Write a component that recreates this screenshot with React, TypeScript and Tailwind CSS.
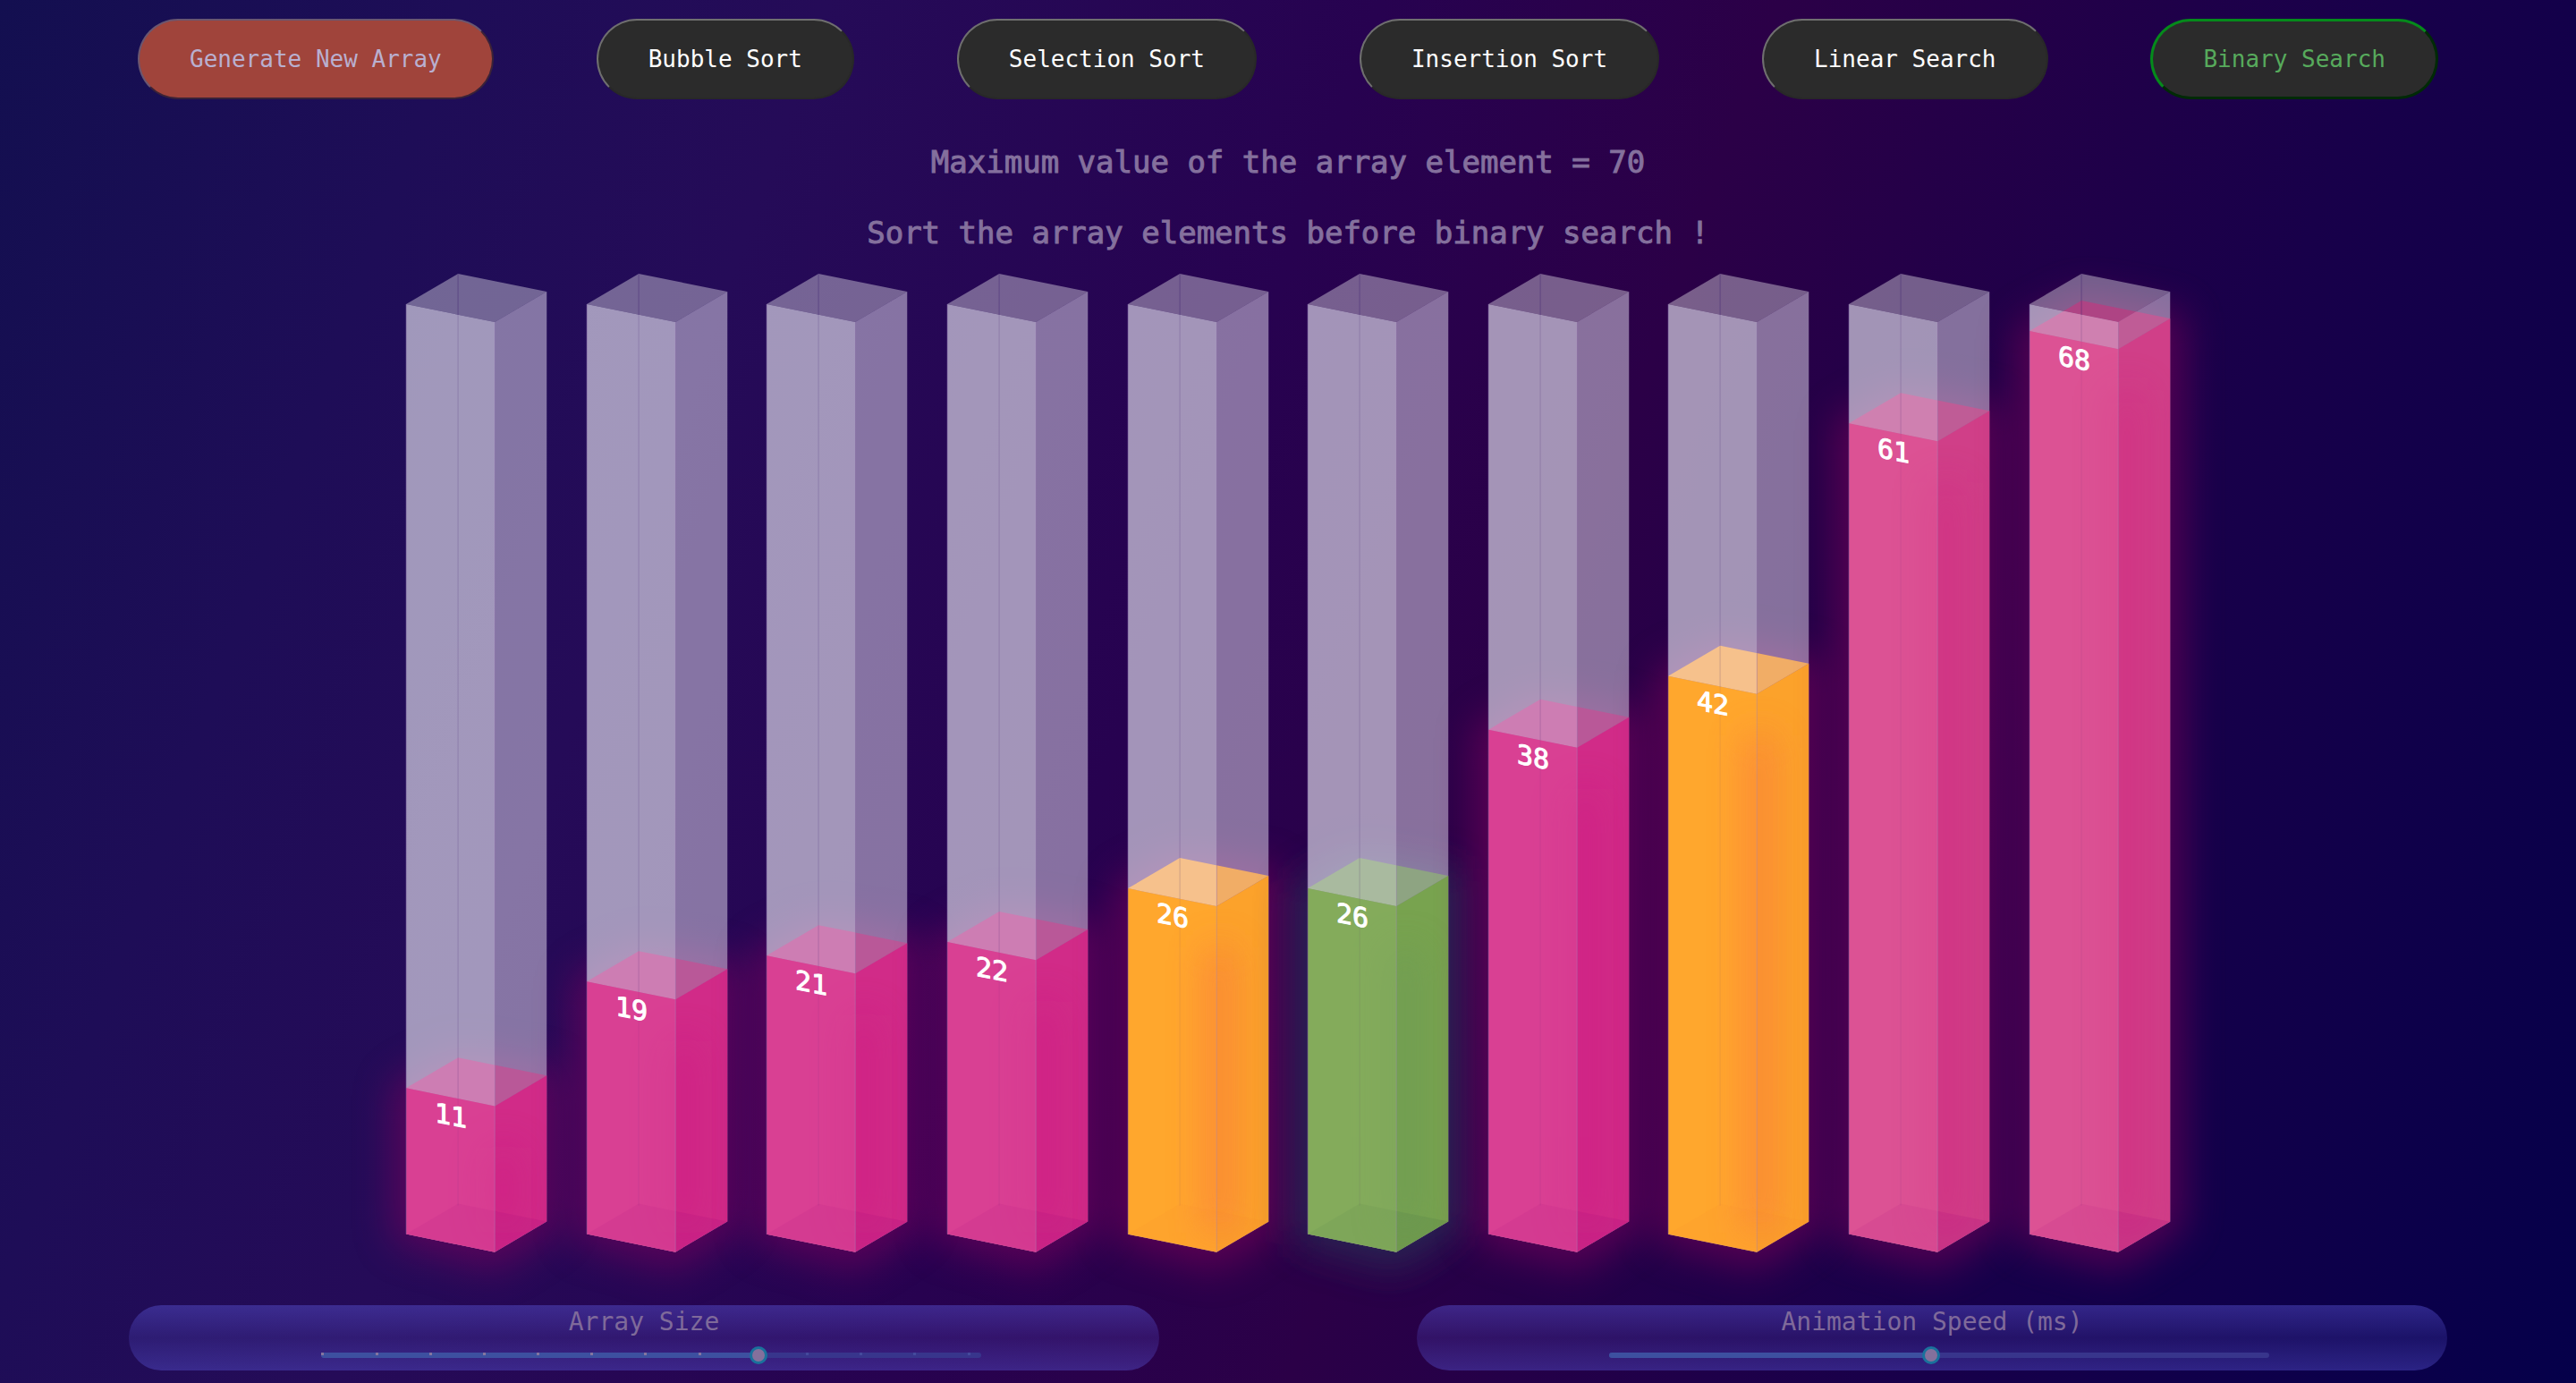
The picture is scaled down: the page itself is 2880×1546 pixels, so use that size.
import React, { useState } from "react";

type Tone = "pink" | "rose" | "amber" | "green";

const BARS: { value: number; tone: Tone }[] = [
  { value: 11, tone: "pink" },
  { value: 19, tone: "pink" },
  { value: 21, tone: "pink" },
  { value: 22, tone: "pink" },
  { value: 26, tone: "amber" },
  { value: 26, tone: "green" },
  { value: 38, tone: "pink" },
  { value: 42, tone: "amber" },
  { value: 61, tone: "rose" },
  { value: 68, tone: "rose" },
];

const MAX = 70;
const COLUMN = 1038;

interface Palette {
  front: string;
  right: string;
  core: string;
  glow: string;
  glowOpacity: number;
  lidLeft: string;
  lidRight: string;
  lidTop: string;
  floor: string;
}

const PALETTES: Record<Tone, Palette> = {
  pink: {
    front: "#d94093",
    right: "#d12b88",
    core: "#cf1480",
    glow: "#84045f",
    glowOpacity: 0.56,
    lidLeft: "#cd7db3",
    lidRight: "#b95898",
    lidTop: "#ae4482",
    floor: "#a81080",
  },
  rose: {
    front: "#dc5294",
    right: "#d03f88",
    core: "#d4207e",
    glow: "#84005a",
    glowOpacity: 0.56,
    lidLeft: "#cf80b0",
    lidRight: "#bf5c96",
    lidTop: "#ae4484",
    floor: "#a81080",
  },
  amber: {
    front: "#ffa72d",
    right: "#fca22b",
    core: "#f97440",
    glow: "#84005a",
    glowOpacity: 0.56,
    lidLeft: "#f6c18c",
    lidRight: "#f1ad66",
    lidTop: "#e8a060",
    floor: "#f07030",
  },
  green: {
    front: "#84ab5b",
    right: "#78a34f",
    core: "#66945a",
    glow: "#2c3458",
    glowOpacity: 0.7,
    lidLeft: "#a9ba9f",
    lidRight: "#8ea482",
    lidTop: "#88a070",
    floor: "#4c7848",
  },
};

function Bar({ value, tone, index }: { value: number; tone: Tone; index: number }) {
  const p = PALETTES[tone];
  const t = COLUMN - Math.round((value / MAX) * COLUMN);
  const lid = `0,${34 + t} 58,${t} 157,${20 + t} 99,${54 + t}`;
  const front = `0,${34 + t} 99,${54 + t} 99,1092 0,1072`;
  const right = `99,${54 + t} 157,${20 + t} 157,1058 99,1092`;
  const body = `0,${34 + t} 99,${54 + t} 157,${20 + t} 157,1058 99,1092 0,1072`;
  const id = `bar${index}`;
  return (
    <svg viewBox="0 0 157 1092" className="h-auto w-[78%] overflow-visible" role="img" aria-label={`Element ${value}`}>
      <defs>
        <filter id={`${id}-blur`} filterUnits="userSpaceOnUse" x="-150" y="-150" width="460" height="1400">
          <feGaussianBlur stdDeviation="22" />
        </filter>
        <clipPath id={`${id}-top`}>
          <polygon points="0,34 58,0 157,20 99,54" />
        </clipPath>
        <clipPath id={`${id}-front`}>
          <polygon points="0,34 99,54 99,1092 0,1072" />
        </clipPath>
        <clipPath id={`${id}-right`}>
          <polygon points="99,54 157,20 157,1058 99,1092" />
        </clipPath>
        <clipPath id={`${id}-body`}>
          <polygon points={body} />
        </clipPath>
      </defs>

      <polygon
        points={`-14,${30 + t} 58,${t - 6} 172,${14 + t} 172,1066 100,1112 -14,1080`}
        fill={p.glow}
        opacity={p.glowOpacity}
        filter={`url(#${id}-blur)`}
      />

      <polygon points="0,34 58,0 157,20 99,54" fill="#ffffff" fillOpacity="0.37" />
      <polygon points="0,34 99,54 99,1092 0,1072" fill="#e4e0f0" fillOpacity="0.66" />
      <polygon points="99,54 157,20 157,1058 99,1092" fill="#e4dcf0" fillOpacity="0.51" />

      <polygon points={lid} fill={p.lidTop} clipPath={`url(#${id}-top)`} />
      <polygon points={lid} fill={p.lidLeft} clipPath={`url(#${id}-front)`} />
      <polygon points={lid} fill={p.lidRight} clipPath={`url(#${id}-right)`} />
      <path d="M58 0V46" stroke="#3c2070" strokeOpacity="0.4" strokeWidth="1" />
      <path d={`M58 46V${t + 46}`} stroke="#3c2070" strokeOpacity="0.2" strokeWidth="1" />

      <polygon points={front} fill={p.front} />
      <polygon points={right} fill={p.right} />
      <g clipPath={`url(#${id}-body)`}>
        <polygon points="0,1072 58,1038 157,1058 99,1092" fill={p.floor} fillOpacity={tone === "amber" ? 0.06 : 0.2} />
        <rect
          x={tone === "amber" ? 90 : 92}
          y={t + 100}
          width={tone === "amber" ? 24 : 34}
          height={970 - t}
          fill={p.core}
          opacity={tone === "amber" ? 0.85 : 0.42}
          filter={`url(#${id}-blur)`}
        />
        {tone !== "amber" && (
          <rect x="0" y="0" width="99" height="1092" fill={p.front} fillOpacity="0.5" />
        )}
        <path d="M58 0V1040" stroke="#5c3080" strokeOpacity="0.1" strokeWidth="1" />
      </g>
      <path d="M99 54V1092" stroke="#a890c0" strokeOpacity="0.35" strokeWidth="1" />
      <path d="M0 34V1072" stroke="#6c4c94" strokeOpacity="0.6" strokeWidth="1" />

      <text
        transform={`translate(50 ${t + 75}) skewY(11)`}
        textAnchor="middle"
        fill="#ffffff"
        stroke="#ffffff"
        strokeWidth="1"
        fontSize="30"
      >
        {value}
      </text>
    </svg>
  );
}

const DARK =
  "border-2 border-t-[#6f6f6f] border-l-[#6f6f6f] border-r-[#282828] border-b-[#282828] bg-[#2b2b2b] text-white";
const MUTED =
  "border-2 border-t-[#6a5670] border-l-[#6a5670] border-r-[#3a2238] border-b-[#3a2238] bg-[#a0443b] text-[#b9b0d0]";
const ACTIVE =
  "border-3 border-t-[#058a1b] border-l-[#058a1b] border-r-[#002a06] border-b-[#002a06] bg-[#2b2b2b] text-[#57aa5c]";

const BUTTONS = [
  { label: "Generate New Array", look: MUTED },
  { label: "Bubble Sort", look: DARK },
  { label: "Selection Sort", look: DARK },
  { label: "Insertion Sort", look: DARK },
  { label: "Linear Search", look: DARK },
  { label: "Binary Search", look: ACTIVE },
];

function SliderPanel({
  id,
  label,
  min,
  max,
  start,
  ticks,
}: {
  id: string;
  label: string;
  min: number;
  max: number;
  start: number;
  ticks: number;
}) {
  const [value, setValue] = useState(start);
  const percent = ((value - min) / (max - min)) * 100;
  return (
    <div className="mx-auto flex w-4/5 flex-col items-center rounded-full bg-linear-to-b from-[#5954d5]/45 via-[#5954d5]/22 to-[#5954d5]/42 pb-[14px]">
      <label htmlFor={id} className="text-[28px] leading-[38px] text-[#7f6a9a]">
        {label}
      </label>
      <div className="relative mt-[15px] ml-4 h-[6px] w-[64%] rounded-full bg-[#38358c]">
        <div className="h-full rounded-full bg-[#3d50a0]" style={{ width: `${percent}%` }} />
        <div className="absolute inset-x-0 top-0 flex justify-between pr-[12px]">
          {Array.from({ length: ticks }, (_, i) => (
            <span
              key={i}
              className={`h-[3px] w-[3px] ${(i / (ticks - 1)) * 100 < percent ? "bg-[#84759f]" : "bg-[#444a9c]"}`}
            />
          ))}
        </div>
        <input
          id={id}
          type="range"
          min={min}
          max={max}
          value={value}
          onChange={(e) => setValue(Number(e.target.value))}
          className="absolute inset-0 h-full w-full appearance-none bg-transparent [&::-webkit-slider-thumb]:h-5 [&::-webkit-slider-thumb]:w-5 [&::-webkit-slider-thumb]:appearance-none [&::-webkit-slider-thumb]:rounded-full [&::-webkit-slider-thumb]:border-3 [&::-webkit-slider-thumb]:border-solid [&::-webkit-slider-thumb]:border-[#1a719c] [&::-webkit-slider-thumb]:bg-[#84709c]"
        />
      </div>
    </div>
  );
}

export default function App() {
  return (
    <main className="min-h-screen overflow-hidden bg-[linear-gradient(109.6deg,#130f50_0%,#1e0d57_15%,#250b58_27%,#270250_45%,#2b0047_58%,#18004a_78%,#05004a_100%)] pb-[14px] font-['DejaVu_Sans_Mono',monospace]">
      <header className="flex items-center justify-between px-[154px] pt-[21px]">
        {BUTTONS.map((b) => (
          <button
            key={b.label}
            type="button"
            className={`h-[90px] rounded-full px-14 text-[26px] leading-none ${b.look}`}
          >
            {b.label}
          </button>
        ))}
      </header>

      <section className="mt-[50px] flex flex-col items-center gap-[39px] text-center text-[34px] leading-[40px] text-[#84709d] [-webkit-text-stroke:1px_#84709d]">
        <h2>Maximum value of the array element = {MAX}</h2>
        <h2>Sort the array elements before binary search !</h2>
      </section>

      <section className="mx-auto mt-[26px] grid w-[70%] grid-cols-10 justify-items-center">
        {BARS.map((b, i) => (
          <Bar key={i} index={i} value={b.value} tone={b.tone} />
        ))}
      </section>

      <footer className="relative mt-[59px] grid grid-cols-2">
        <SliderPanel id="array-size" label="Array Size" min={3} max={15} start={11} ticks={13} />
        <SliderPanel id="animation-speed" label="Animation Speed (ms)" min={0} max={1000} start={487} ticks={0} />
      </footer>
    </main>
  );
}
